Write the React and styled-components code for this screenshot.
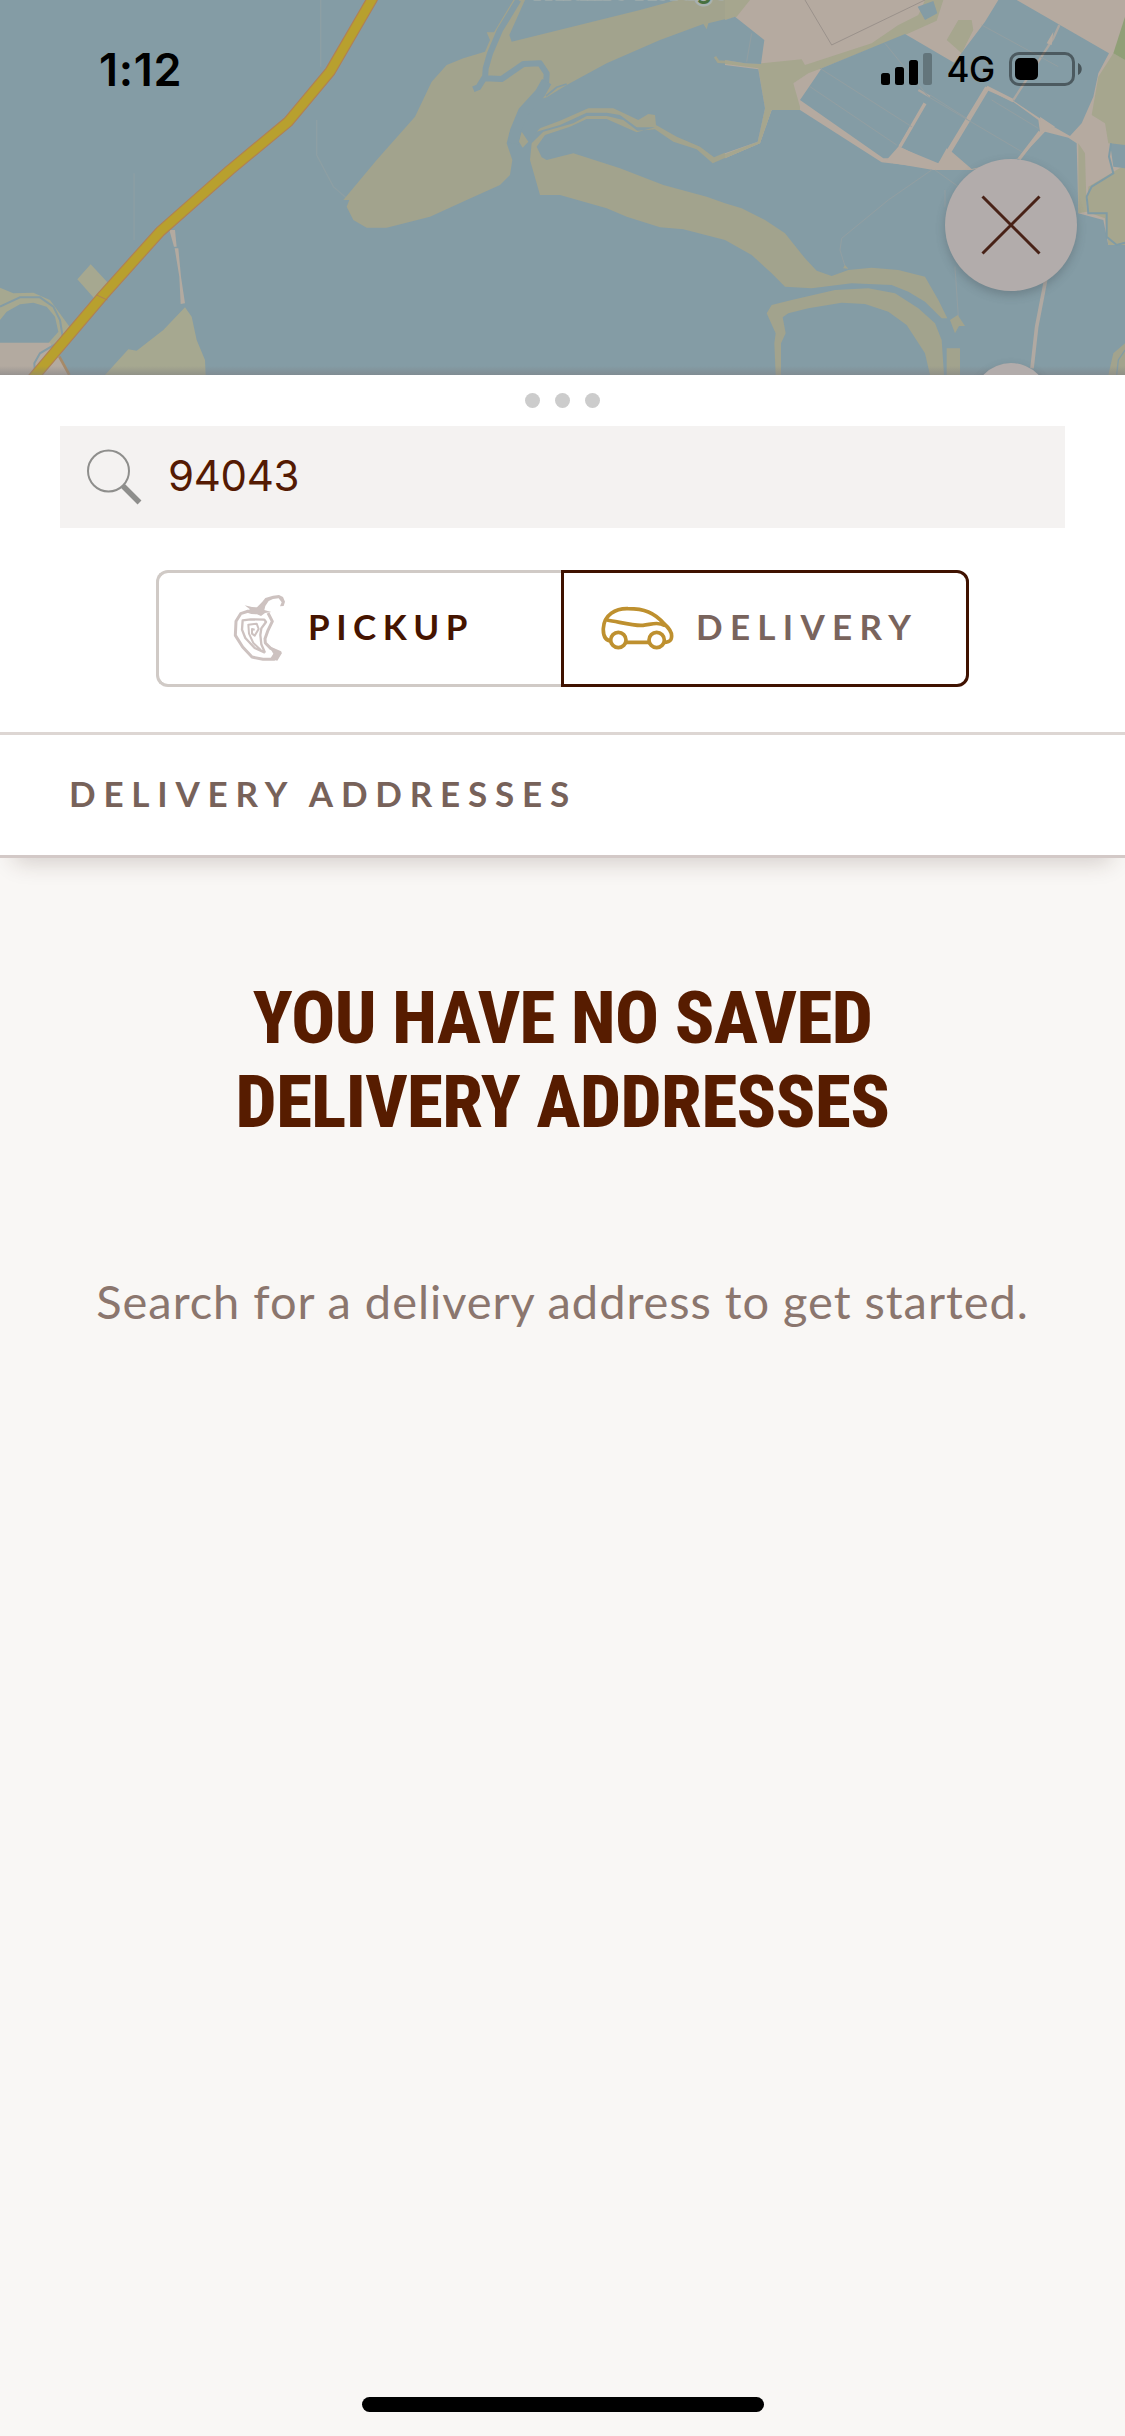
import React from 'react';
import styled, { createGlobalStyle } from 'styled-components';

const GlobalStyle = createGlobalStyle`
  *, *::before, *::after { box-sizing: border-box; }
  body { margin: 0; background: #f9f7f5; }
`;

const Screen = styled.main`
  display: flex;
  flex-direction: column;
  width: 1125px;
  height: 2436px;
  overflow: hidden;
  background: #f9f7f5;
  color: #451400;
  font-family: Lato, "Open Sans", sans-serif;
`;

const MapHeader = styled.header`
  position: relative;
  display: flex;
  flex-direction: column;
  height: 375px;
  overflow: hidden;
  background: #849ca5;
`;

const MapCanvas = styled.svg`
  position: absolute;
  inset: 0;
  width: 1125px;
  height: 375px;
`;

const StatusBar = styled.div`
  position: relative;
  display: flex;
  justify-content: space-between;
  align-items: center;
  height: 138px;
  flex: none;
  padding: 0 43px 0 99px;
  color: #000;
  font-family: Inter, sans-serif;
`;

const Clock = styled.time`
  font-size: 45px;
  font-weight: 600;
  letter-spacing: 0.7px;
`;

const StatusIcons = styled.div`
  display: flex;
  align-items: center;
`;

const Network = styled.span`
  margin: 0 14px 0 14px;
  font-size: 35px;
  font-weight: 500;
  letter-spacing: -0.3px;
`;

const MapControls = styled.div`
  position: relative;
  display: flex;
  flex-direction: column;
  align-items: center;
  align-self: flex-end;
  flex: none;
  gap: 72px;
  margin: 21px 48px 0 0;
`;

const RoundButton = styled.button`
  display: grid;
  place-items: center;
  flex: none;
  width: ${(p) => p.$size}px;
  height: ${(p) => p.$size}px;
  padding: 0;
  border: 0;
  border-radius: 50%;
  background: #b2acab;
  box-shadow: 0 4px 10px rgba(60, 70, 75, 0.3);
`;

const Sheet = styled.section`
  display: flex;
  flex-direction: column;
  flex: none;
  height: 483px;
  background: #fff;
  border-bottom: 3px solid #d3c9c7;
  box-shadow: 0 18px 22px -14px rgba(60, 35, 25, 0.2);
`;

const Grabber = styled.div`
  display: flex;
  justify-content: center;
  gap: 15px;
  padding: 18px 0;
`;

const Dot = styled.i`
  width: 15px;
  height: 15px;
  border-radius: 50%;
  background: #ccc;
`;

const SearchField = styled.label`
  display: flex;
  align-items: center;
  gap: 26px;
  height: 102px;
  margin: 0 60px;
  padding: 0 26px;
  background: #f4f2f1;
`;

const SearchInput = styled.input`
  flex: 1;
  min-width: 0;
  padding: 0 0 4px;
  border: 0;
  outline: 0;
  background: transparent;
  color: #541a03;
  font-family: Inter, sans-serif;
  font-size: 42px;
  letter-spacing: -0.3px;
`;

const Segments = styled.div`
  display: flex;
  width: 813px;
  height: 117px;
  margin: 42px 156px 45px;
`;

const Segment = styled.button`
  display: flex;
  align-items: center;
  width: ${(p) => (p.$active ? 408 : 405)}px;
  padding: 0 0 0 ${(p) => (p.$active ? 37 : 74)}px;
  gap: 21px;
  border: 3px solid ${(p) => (p.$active ? '#3f1200' : '#d0cac6')};
  border-width: ${(p) => (p.$active ? '3px' : '3px 0 3px 3px')};
  border-radius: ${(p) => (p.$active ? '0 12px 12px 0' : '12px 0 0 12px')};
  background: #fff;
  color: ${(p) => (p.$active ? '#79645d' : '#451400')};
  font-family: Lato, sans-serif;
  font-size: 35px;
  font-weight: 700;
  letter-spacing: ${(p) => (p.$active ? 7.3 : 6.5)}px;
`;

const SegmentLabel = styled.span`
  padding-bottom: 5px;
`;

const SectionTitle = styled.h2`
  display: flex;
  align-items: center;
  flex: 1;
  margin: 0;
  padding: 0 69px 5px;
  border-top: 3px solid #ddd6d3;
  color: #77625a;
  font-size: 35px;
  font-weight: 700;
  letter-spacing: 7.8px;
`;

const EmptyState = styled.section`
  display: flex;
  flex-direction: column;
  align-items: center;
  flex: 1;
  padding-top: 118px;
`;

const EmptyTitle = styled.h1`
  margin: 0;
  color: #571c00;
  font-family: Roboto, sans-serif;
  font-size: 73px;
  font-weight: 800;
  font-stretch: 75%;
  line-height: 84px;
  letter-spacing: -0.55px;
  text-align: center;
  white-space: nowrap;
`;

const EmptyText = styled.p`
  margin: 127px 0 0;
  color: #8b766e;
  font-size: 47px;
  line-height: 60px;
  letter-spacing: 0.95px;
  white-space: nowrap;
`;

const HomeIndicator = styled.div`
  align-self: center;
  flex: none;
  width: 402px;
  height: 15px;
  margin-bottom: 24px;
  border-radius: 8px;
  background: #000;
`;

function BayMap() {
  return (
    <MapCanvas viewBox="0 0 1125 375">
      <defs>
        <linearGradient id="edge" x1="0" y1="0" x2="0" y2="1">
          <stop offset="0" stopColor="#7c7c80" stopOpacity="0" />
          <stop offset="1" stopColor="#7c7c80" stopOpacity="0.5" />
        </linearGradient>
      </defs>
      <g transform="scale(.333333)">
        <path fill="#a6a890" d="M272 793 325 850 285 898 232 838ZM0 863 40 880 100 878 150 900 190 955 212 985 150 1060 140 1035 175 995 165 950 140 920 100 908 60 913 20 935 0 960ZM315 1125 385 1048 410 1052 490 990 555 922 575 950 590 1020 615 1080 617 1125Z" />
        <path fill="#b3aaa0" d="M0 1028H150L170 1060 210 1125H0ZM508 690H525L530 740H522ZM524 745H535L543 830 555 910 542 912 538 830Z" />
        <path fill="none" stroke="#849ca5" strokeWidth="6" d="M0 920 60 892 120 892 160 920 180 960 188 1010M170 1030 120 1060 103 1090 105 1125" />
        <path fill="none" stroke="#8d9fa4" strokeWidth="4" d="M402 520V720M950 360V465L1000 560 1040 595M962 0V200" />
        <path fill="none" stroke="#a68a68" strokeWidth="8" d="M178 1070 208 1125" />
        <path fill="none" stroke="#b08055" strokeWidth="34" strokeLinejoin="round" d="M1125-20 1115 0 990 215 865 365 690 510 480 695 310 885 170 1050 90 1145" />
        <path fill="none" stroke="#b8a02e" strokeWidth="27" strokeLinejoin="round" d="M1125-20 1115 0 990 215 865 365 690 510 480 695 310 885 170 1050 90 1145" />
        <path fill="none" stroke="#b08055" strokeWidth="3" d="M290 885 322 900" />
      </g>
      <g transform="translate(340 0) scale(.333333)">
        <path fill="#a2a38d" d="M10 600 110 480 225 350 275 245 320 195 370 175 435 155 450 120 440 97 462 97 520 0H555L508 105 515 125 900 30 1010 0H1210V70L1185 50 1105 70 1100 88 1090 72 960 120 800 190 680 255 620 292 590 300 550 330 510 390 500 430 517 480 510 525 480 555 380 600 270 650 140 683 80 683 40 660 20 620 28 600Z" />
        <path fill="none" stroke="#849ca5" strokeLinejoin="round" strokeWidth="18" d="M535 0 480 90 450 160 437 205 435 235 485 237 550 192 600 190 620 220 618 260M435 230 415 262 400 268" />
        <path fill="none" stroke="#849ca5" strokeLinejoin="round" strokeWidth="32" d="M620 245 600 280 550 335 527 390 520 430" />
        <path fill="none" stroke="#849ca5" strokeWidth="5" d="M618 288 650 262 680 252" />
        <path fill="#a2a38d" d="M545 395 565 425 548 443 537 425ZM575 430 610 395 700 370 740 348 800 348 850 360 892 392 945 388 1000 425 1070 448 1118 490 1210 450 1210 435 1122 472 1080 440 1010 410 948 375 945 345 925 342 895 360 820 325 745 325 660 362 600 385 575 412 590 395 660 375 740 338 800 338 840 345 890 382 945 382 890 397 800 357 740 357 690 380 615 405 590 440 605 472 620 480 700 460 840 505 970 555 1100 590 1155 610 1205 625 1275 660 1335 700 1395 775 1430 812 1475 828 1525 810 1595 803 1675 810 1755 830 1795 900 1822 955 1805 955 1755 905 1705 875 1655 855 1535 850 1415 865 1335 860 1295 820 1235 765 1155 720 1030 688 960 682 860 650 800 625 660 585 600 585 570 480Z" />
        <path fill="none" stroke="#a2a38d" strokeWidth="8" d="M1125 170 1135 185 1200 189" />
      </g>
      <g transform="translate(725 0) scale(.333333)">
        <path fill="#b5aaa0" d="M0 0H1200V735H1150L1135 660 1060 640 1055 430 1030 413 960 395 885 475 740 510 625 505 470 487 225 330 140 330 105 430 0 475Z" />
        <path fill="#a6a68e" d="M0 0H75L35 50 0 60ZM0 180 60 190 110 190 230 178 240 195 440 130 520 75 580 45 600 0H655L635 62 545 103 290 205 250 220 205 250 225 320 225 330 140 330 105 430 0 475V462L98 425 120 325 100 205 0 192ZM700 60H740L745 90 710 160 665 120ZM1165 160 1200 180V440L1150 430 1140 370 1100 345 1120 230ZM1060 430 1080 460 1085 635 1060 640ZM1090 560 1200 495V735L1150 735 1140 655 1085 635Z" />
        <path fill="#909f77" d="M1200 50 1165 160 1200 180Z" />
        <path fill="#849ca5" d="M0 60 30 50 118 120 108 192 60 190 0 180ZM0 195 100 208 120 325 98 425 0 460ZM225 300 290 205 540 102 690 190 605 295 500 475 475 475ZM615 292 705 185 785 265 665 455 640 490 625 490 525 440ZM790 272 860 302 940 360 945 395 880 475 740 507 680 455ZM600 295 700 172 780 65 820 0H875L1152 160 1120 220 1105 290 1070 370 1035 408 960 365 865 302 785 260 665 455 640 490 525 440ZM578 20 625 3 637 40 600 60ZM1155 430 1200 435V505L1165 500Z" />
        <path fill="none" stroke="#b5aaa0" strokeWidth="10" d="M785 262 665 460M600 310 525 440M945 395 882 478M785 262 865 302" />
        <path fill="none" stroke="#aba6a0" strokeWidth="7" d="M865 300 985 115 1003 75M580 270 615 290" />
        <path fill="#b5aaa0" d="M520 440 640 490 665 445 740 510 625 510 480 485ZM985 95 965 130 980 135ZM945 350 990 380 950 395Z" />
        <path fill="none" stroke="#939fa2" strokeWidth="3" d="M285 205 560 380M255 260 515 435M480 130 610 290 890 455M615 285 725 355M800 300 940 385M770 75 1000 200M80 100 65 185M620 510 490 600 350 715 345 750 362 805M630 510 700 560M690 800 700 950M660 570V620" />
        <path fill="none" stroke="#8c8580" strokeWidth="2" d="M240 0 320 135 600 0" />
        <path fill="none" stroke="#7f9ba5" strokeWidth="6" d="M1158 430 1152 470 1165 520 1100 560 1085 590 1090 640 1145 640 1145 710 1175 735 1200 728" />
        <path fill="#a2a38d" d="M125 940 140 915 200 900 330 870 430 865 510 880 580 925 630 970 650 1020 657 1125H615L600 1060 545 975 490 935 420 912 350 908 250 925 190 940 173 952 182 1000 168 1030V1125H152L148 1030 152 1000ZM665 1045H705V1125H665ZM675 960 698 945 720 978 702 978 690 1000ZM1150 1125 1165 1060 1200 1030V1125ZM354 805 360 795 370 806Z" />
        <path fill="none" stroke="#849ca5" strokeWidth="4" d="M1175 1125 1180 1080 1200 1050" />
        <path fill="none" stroke="#b0a9a2" strokeWidth="11" d="M962 840 935 980 921 1105" />
      </g>
      <text x="530" y="-2" fill="#47703f" stroke="#a9b2b0" strokeWidth="5" paintOrder="stroke" fontFamily="Roboto, sans-serif" fontWeight="500" fontSize="29" textLength="198">Wildlife Refuge</text>
      <rect y="366" width="1125" height="9" fill="url(#edge)" />
    </MapCanvas>
  );
}

function SignalIcon() {
  return (
    <svg width="51" height="32" viewBox="0 0 51 32">
      <rect y="20" width="9" height="12" rx="2.5" />
      <rect x="14" y="14" width="9" height="18" rx="2.5" />
      <rect x="28" y="7" width="9" height="25" rx="2.5" />
      <rect x="42" width="9" height="32" rx="2.5" fillOpacity="0.25" />
    </svg>
  );
}

function BatteryIcon() {
  return (
    <svg width="73" height="34" viewBox="0 0 73 34">
      <rect x="1.5" y="1.5" width="63" height="31" rx="8.5" fill="none" stroke="#000" strokeOpacity="0.42" strokeWidth="3" />
      <rect x="6" y="6" width="23" height="22" rx="5" />
      <path d="M69 11C74 13 74 21 69 23Z" fillOpacity="0.45" />
    </svg>
  );
}

function CloseIcon() {
  return (
    <svg width="60" height="60" viewBox="0 0 60 60" fill="none" stroke="#482217" strokeWidth="3">
      <path d="M1.5 1.5 58.5 58.5M58.5 1.5 1.5 58.5" />
    </svg>
  );
}

function SearchIcon() {
  return (
    <svg width="56" height="58" viewBox="0 0 56 58" fill="none" stroke="#8e8e8c">
      <circle cx="22.5" cy="23" r="20.5" strokeWidth="2" />
      <path d="M37 38 53.5 54.5" strokeWidth="5.5" />
    </svg>
  );
}

function ChiliIcon() {
  return (
    <svg width="54" height="70" viewBox="55 71 162 210" fill="none" stroke="#cdc2c0" strokeLinejoin="round">
      <path strokeWidth="9" d="M102 122 78 130 64 153 62 195 84 230 112 260 145 267 178 267 196 246 168 234 152 218 151 205 160 180 173 153 160 128" />
      <path fill="#cdc2c0" stroke="none" d="M162 226 202 248 188 271 166 266 176 250ZM90 105 112 110 127 111 143 94 152 83 175 76 193 74 205 80 211 94 207 107 196 108 201 96 192 84 175 86 162 92 152 107 149 119 170 125 151 128 139 137 127 132 110 131 88 124 106 117Z" />
      <path strokeWidth="7" d="M151 247 120 233 92 203 82 178 84 150 108 147 149 148 154 155 140 174 137 194 140 222 151 247" />
      <path strokeWidth="6" d="M139 240 116 218 103 190 101 163 126 160 132 176 120 196 112 190 112 176 120 178" />
    </svg>
  );
}

function CarIcon() {
  return (
    <svg width="74" height="46" viewBox="64 78 222 138" fill="none" stroke="#be902f" strokeWidth="11">
      <path d="M97 184C76 182 70 164 71 145 73 104 108 85 145 86 193 86 224 97 254 132 275 150 279 165 274 178 270 185 264 187 251 187M137 187H208M82 120C120 126 165 139 190 136 217 133 231 125 256 137" />
      <circle cx="116" cy="180" r="23" />
      <circle cx="231" cy="180" r="23" />
    </svg>
  );
}

export default function App() {
  return (
    <>
      <GlobalStyle />
      <Screen>
        <MapHeader>
          <BayMap />
          <StatusBar>
            <Clock>1:12</Clock>
            <StatusIcons>
              <SignalIcon />
              <Network>4G</Network>
              <BatteryIcon />
            </StatusIcons>
          </StatusBar>
          <MapControls>
            <RoundButton $size={132} aria-label="Close"><CloseIcon /></RoundButton>
            <RoundButton $size={76} aria-label="Locate" />
          </MapControls>
        </MapHeader>
        <Sheet>
          <Grabber><Dot /><Dot /><Dot /></Grabber>
          <SearchField>
            <SearchIcon />
            <SearchInput defaultValue="94043" />
          </SearchField>
          <Segments>
            <Segment><ChiliIcon /><SegmentLabel>PICKUP</SegmentLabel></Segment>
            <Segment $active><CarIcon /><SegmentLabel>DELIVERY</SegmentLabel></Segment>
          </Segments>
          <SectionTitle>DELIVERY ADDRESSES</SectionTitle>
        </Sheet>
        <EmptyState>
          <EmptyTitle>YOU HAVE NO SAVED<br />DELIVERY ADDRESSES</EmptyTitle>
          <EmptyText>Search for a delivery address to get started.</EmptyText>
        </EmptyState>
        <HomeIndicator />
      </Screen>
    </>
  );
}
